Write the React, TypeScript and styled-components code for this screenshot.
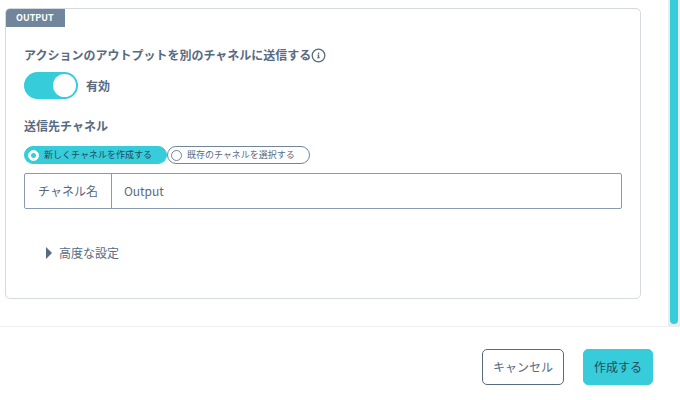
import React, { useState } from "react";
import styled, { createGlobalStyle } from "styled-components";

const color = {
  text: "#586a7f",
  slate: "#71869a",
  field: "#8999ae",
  line: "#d5dae0",
  cyan: "#36ccda",
};

const GlobalStyle = createGlobalStyle`
  *, *::before, *::after { box-sizing: border-box; }
  body {
    margin: 0;
    background: #fff;
    color: ${color.text};
    font: 12px/18px "Noto Sans CJK JP", "Noto Sans", sans-serif;
  }
  button, input { font: inherit; color: inherit; margin: 0; }
`;

const Dialog = styled.main`
  display: flex;
  flex-direction: column;
`;

const ScrollArea = styled.div`
  display: flex;
  border-bottom: 1px solid #eceef0;
`;

const Content = styled.div`
  flex: 1;
  min-width: 0;
  padding: 8px 27px 27px 5px;
`;

const ScrollTrack = styled.div`
  display: flex;
  width: 12px;
  padding: 0 2px 2px;
  background: #e9edf0;
`;

const ScrollThumb = styled.div`
  flex: 1;
  background: ${color.cyan};
  border-radius: 0 0 4px 4px;
`;

const Panel = styled.section`
  border: 1px solid ${color.line};
  border-radius: 5px;
  overflow: hidden;
`;

const Tag = styled.h2`
  width: fit-content;
  margin: 0;
  padding: 0 11px 0 10px;
  background: ${color.slate};
  color: #fff;
  font-size: 9px;
  font-weight: 700;
  line-height: 18px;
`;

const PanelBody = styled.div`
  padding: 19px 18px 36px;
`;

const Heading = styled.h3`
  display: flex;
  align-items: center;
  margin: 0;
  font-size: 12px;
  font-weight: 700;
`;

const SwitchLabel = styled.label`
  display: flex;
  align-items: center;
  gap: 8px;
  width: fit-content;
  margin: 8px 0 18px;
  font-weight: 700;
`;

const Switch = styled.input`
  appearance: none;
  display: flex;
  align-items: center;
  width: 54px;
  height: 27px;
  padding: 2px;
  border-radius: 14px;
  background: #c3ccd5;
  cursor: pointer;

  &::before {
    content: "";
    width: 23px;
    height: 23px;
    border-radius: 50%;
    background: #fff;
  }
  &:checked {
    justify-content: flex-end;
    background: ${color.cyan};
  }
`;

const Choices = styled.div`
  display: flex;
  margin: 11px 0 9px;
`;

const Choice = styled.label<{ $selected: boolean }>`
  display: flex;
  align-items: center;
  gap: 5px;
  height: 18px;
  padding: 0 14px 0 3px;
  border: 1px solid ${(p) => (p.$selected ? color.cyan : color.slate)};
  border-radius: 9px;
  background: ${(p) => (p.$selected ? color.cyan : "#fff")};
  color: ${(p) => (p.$selected ? "#244b5c" : color.text)};
  font-size: 9px;
  line-height: 16px;
  white-space: nowrap;
  cursor: pointer;
`;

const Radio = styled.input`
  appearance: none;
  width: 11px;
  height: 11px;
  border: 1px solid ${color.slate};
  border-radius: 50%;
  background: #fff;

  &:checked {
    border-color: #fff;
    background: radial-gradient(circle, ${color.cyan} 2px, #fff 3px);
  }
`;

const Field = styled.div`
  display: flex;
  height: 36px;
  border: 1px solid ${color.field};
  border-radius: 2px;
`;

const FieldLabel = styled.label`
  display: flex;
  align-items: center;
  padding: 0 13px;
  border-right: 1px solid ${color.field};
  white-space: nowrap;
`;

const FieldInput = styled.input`
  flex: 1;
  min-width: 0;
  padding: 0 12px;
  border: 0;
  background: transparent;
`;

const Disclosure = styled.button`
  display: flex;
  align-items: center;
  gap: 7px;
  margin: 35px 0 0 22px;
  padding: 0;
  border: 0;
  background: none;
  cursor: pointer;
`;

const Footer = styled.footer`
  display: flex;
  justify-content: flex-end;
  gap: 19px;
  padding: 22px 27px 15px;
`;

const Action = styled.button<{ $primary?: boolean }>`
  height: 36px;
  padding: 0 10px;
  border: 1px solid ${(p) => (p.$primary ? color.cyan : color.text)};
  border-radius: 5px;
  background: ${(p) => (p.$primary ? color.cyan : "#fff")};
  color: ${(p) => (p.$primary ? "#244b5c" : color.text)};
  cursor: pointer;
`;

const InfoIcon = () => (
  <svg width="15" height="15" viewBox="0 0 15 15" fill="none" aria-hidden="true">
    <circle cx="7.5" cy="7.5" r="6.3" stroke={color.text} strokeWidth="1.3" />
    <path d="M7 4.6h1.2v1.3H7zM6.6 6.6h1.6v2.6h.6v1H6.2v-1h.6z" fill={color.text} />
  </svg>
);

const Triangle = () => (
  <svg width="6" height="12" viewBox="0 0 6 12" aria-hidden="true">
    <path d="M0 0L6 6L0 12Z" fill={color.text} />
  </svg>
);

const options = [
  { value: "new", label: "新しくチャネルを作成する" },
  { value: "existing", label: "既存のチャネルを選択する" },
];

export default function App() {
  const [enabled, setEnabled] = useState(true);
  const [target, setTarget] = useState("new");
  const [name, setName] = useState("Output");

  return (
    <>
      <GlobalStyle />
      <Dialog>
        <ScrollArea>
          <Content>
            <Panel>
              <Tag>OUTPUT</Tag>
              <PanelBody>
                <Heading>
                  アクションのアウトプットを別のチャネルに送信する
                  <InfoIcon />
                </Heading>
                <SwitchLabel>
                  <Switch
                    type="checkbox"
                    role="switch"
                    checked={enabled}
                    onChange={(e) => setEnabled(e.target.checked)}
                  />
                  有効
                </SwitchLabel>
                <Heading id="target-heading">送信先チャネル</Heading>
                <Choices role="radiogroup" aria-labelledby="target-heading">
                  {options.map((o) => (
                    <Choice key={o.value} $selected={target === o.value}>
                      <Radio
                        type="radio"
                        name="target"
                        value={o.value}
                        checked={target === o.value}
                        onChange={() => setTarget(o.value)}
                      />
                      {o.label}
                    </Choice>
                  ))}
                </Choices>
                <Field>
                  <FieldLabel htmlFor="channel-name">チャネル名</FieldLabel>
                  <FieldInput
                    id="channel-name"
                    type="text"
                    value={name}
                    onChange={(e) => setName(e.target.value)}
                  />
                </Field>
                <Disclosure type="button" aria-expanded="false">
                  <Triangle />
                  高度な設定
                </Disclosure>
              </PanelBody>
            </Panel>
          </Content>
          <ScrollTrack aria-hidden="true">
            <ScrollThumb />
          </ScrollTrack>
        </ScrollArea>
        <Footer>
          <Action type="button">キャンセル</Action>
          <Action type="button" $primary>
            作成する
          </Action>
        </Footer>
      </Dialog>
    </>
  );
}
